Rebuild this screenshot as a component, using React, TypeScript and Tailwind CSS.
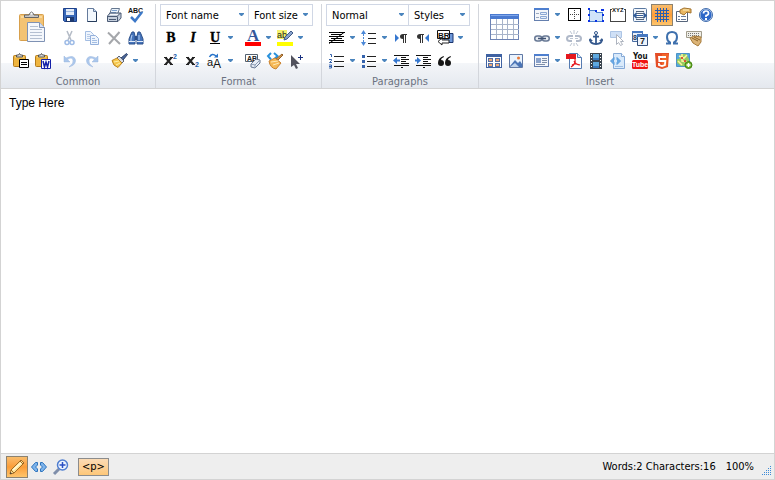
import { useState, type ReactNode } from "react";

const BLUE = "#3563ad";

// ---- icons ----

function Icon({ children, crisp }: { children: ReactNode; crisp?: boolean }) {
  return (
    <svg width="16" height="16" viewBox="0 0 16 16" fill="none" className="shrink-0 overflow-visible" aria-hidden="true" shapeRendering={crisp ? "crispEdges" : undefined}>
      {children}
    </svg>
  );
}

function Arrow() {
  return (
    <svg width="5" height="4" viewBox="0 0 5 4" aria-hidden="true">
      <path d="M0 0h5v1L3 3H2L0 1z" fill="#4a84bd" />
    </svg>
  );
}

function Clip() {
  return (
    <>
      <rect x=".5" y="2.500" width="12" height="11" rx="1" fill="#efb53f" stroke="#b47c1c" />
      <path d="M2 4h9" stroke="#fbdf92" />
      <path d="M3.500 4V2h2q1-3 2 0h2v2z" fill="#ddd" stroke="#555" />
    </>
  );
}

const pasteBig = (
  <svg width="28" height="32" viewBox="0 0 28 32" fill="none" aria-hidden="true">
    <rect x="1.500" y="3.500" width="24" height="26" rx="1" fill="#f3c374" stroke="#d8a04c" />
    <path d="M3 5h21v2H3z" fill="#f9d99d" />
    <path d="M6.500 6.500V4h4.500q2.500-6 5 0h4.500v2.500z" fill="#c9c9c9" stroke="#666" />
    <circle cx="13.500" cy="2.500" r="1" fill="#fff" />
    <path d="M9.500 11.500h12l5 5v14h-17z" fill="#f4f7fc" stroke="#7f92b4" />
    <path d="M21.500 11.500v5h5" fill="#d6e0f2" stroke="#7f92b4" />
    <path d="M12 15.500h8M12 18.500h12M12 21.500h12M12 24.500h12M12 27.500h12" stroke="#b4bfd1" />
  </svg>
);

const tableBig = (
  <svg width="30" height="26" viewBox="0 0 30 26" fill="none" aria-hidden="true" shapeRendering="crispEdges">
    <rect x="0.500" y="0.500" width="28" height="25" fill="#fff" stroke="#6d83b4" />
    <path d="M0 0h29v5H0z" fill="#4a7ad0" />
    <path d="M1 1h27v1H1z" fill="#7ea5ea" />
    <path d="M1 10.500h28M1 15.500h28M1 20.500h28M6.500 5v20M12.500 5v20M17.500 5v20M23.500 5v20" stroke="#a8b4ca" />
  </svg>
);

const save = (
  <Icon>
    <path d="M1.500 1.500h13v13h-12l-1-1z" fill="#3868b8" stroke="#1d418c" />
    <path d="M4 2h8v6H4z" fill="#e4ecf8" />
    <path d="M4 4.500h8" stroke="#9eb9e2" />
    <path d="M4 10h8v5H4z" fill="#1e396f" />
    <path d="M5 11h3v3H5z" fill="#fff" />
  </Icon>
);
const page = (
  <Icon>
    <path d="M3.500 1.500h6l3 3v10h-9z" fill="#f3f8fd" stroke="#657b9c" />
    <path d="M12.500 5v9.500h-9" stroke="#263c5b" />
    <path d="M9.500 1.500v3h3" fill="#c8d8ec" stroke="#657b9c" />
  </Icon>
);
const print = (
  <Icon>
    <path d="M5.500 1.500h8l-2 6h-8z" fill="#eaf3fc" stroke="#65778f" />
    <path d="M6 3.500h5M5 5.500h5" stroke="#7da2d0" />
    <path d="M1.500 9l2.500-3h11v5l-3 3.500H1.500z" fill="#c5cfdd" stroke="#4b5b75" />
    <path d="M1.500 9.500H11L14.500 6M11.500 9.500v5M3 12.500h7" stroke="#4b5b75" />
    <path d="M4 7.500h8" stroke="#f5f8fc" />
  </Icon>
);
const spell = (
  <Icon>
    <text x="0" y="6" fontSize="7" fontWeight="700" fill="#111" fontFamily="Liberation Sans, sans-serif">ABC</text>
    <path d="M3 10l4 4 7-9" stroke="#3c78c8" strokeWidth="2.500" />
  </Icon>
);
const cut = (
  <Icon>
    <path d="M5 1l4 9M10 1L6 10" stroke="#b4bbc6" strokeWidth="1.500" />
    <circle cx="5" cy="12.500" r="2" stroke="#9ebbe6" strokeWidth="1.500" />
    <circle cx="10" cy="12.500" r="2" stroke="#9ebbe6" strokeWidth="1.500" />
  </Icon>
);
const copy = (
  <Icon>
    <path d="M1.500 1.500h5l3 3v6h-8z" fill="#eff5fd" stroke="#a3bde2" />
    <path d="M3 4.500h3M3 6.500h4M3 8.500h3" stroke="#b7cbe8" />
    <path d="M6.500 5.500h5l3 3v6h-8z" fill="#eff5fd" stroke="#94b0db" />
    <path d="M8 8.500h3M8 10.500h5M8 12.500h5" stroke="#a3bde2" />
  </Icon>
);
const remove = <Icon><path d="M2 2.500l12 11.500M13.500 2L3 14" stroke="#a5a7ab" strokeWidth="2" /></Icon>;
const find = (
  <Icon>
    <path d="M1 9l2-5 1-2h2l1 4v8H1zM9 6l1-4h2l1 2 2 5v5H9z" fill="#4674bb" stroke="#2d518b" />
    <path d="M7 6h2v4H7z" fill="#2d518b" />
    <path d="M4 5l-1 4v2M11 5v5" stroke="#b8d2f4" />
    <path d="M1 11.500h6M9 11.500h6" stroke="#e3edfa" />
  </Icon>
);
const pasteText = (
  <Icon>
    <Clip />
    <path d="M6.500 6.500h9v8h-9z" fill="#fff" stroke="#000" />
    <path d="M8 9.500h6M8 11.500h6" stroke="#000" />
  </Icon>
);
const pasteWord = (
  <Icon>
    <Clip />
    <path d="M6.500 6.500h9v9h-9z" fill="#fff" stroke="#1420a8" />
    <path d="M8 8l1.500 6L11 9l1.500 5L14 8" stroke="#1420a8" strokeWidth="1.500" />
  </Icon>
);
const undo = (
  <Icon>
    <path d="M2 3v6h6L5.500 6.500Q10 3.500 11 7t-4 7q7-2 6.500-7Q12 1 4 5z" fill="#abc7ec" stroke="#9bb7df" strokeWidth=".5" />
  </Icon>
);
const redo = (
  <Icon>
    <path d="M14 3v6H8l2.500-2.500Q6 3.500 5 7t4 7Q2 12 2.500 7 4 1 12 5z" fill="#abc7ec" stroke="#9bb7df" strokeWidth=".5" />
  </Icon>
);
const brush = (
  <Icon>
    <path d="M14.500.5l1 1L11 7 9 5z" fill="#4c689b" stroke="#293e67" />
    <path d="M7 3l5 5-2 2-5-5z" fill="#d9dde5" stroke="#5c6678" />
    <path d="M5 5l5 5-4 4.500Q1 13 0 7.500z" fill="#f5c64d" stroke="#bd8522" />
    <path d="M2 9l5-1M4 12l4-2" stroke="#fff0a8" />
  </Icon>
);

function Letter({ char, italic, underline }: { char: string; italic?: boolean; underline?: boolean }) {
  return (
    <Icon>
      <text x="8" y="12" textAnchor="middle" fontSize="14" fontWeight="700" fontStyle={italic ? "italic" : "normal"} fill="#000" stroke="#000" strokeWidth=".3" fontFamily="Liberation Serif, serif">{char}</text>
      {underline && <path d="M3 13.500h10" stroke="#000" />}
    </Icon>
  );
}

const fontColor = (
  <Icon>
    <text x="2" y="11" fontSize="17" fontWeight="700" fill="#35589b" fontFamily="Liberation Serif, serif">A</text>
    <path d="M0 12h16v4H0z" fill="#f00" />
  </Icon>
);
const highlight = (
  <Icon>
    <path d="M0 0h10v9H0z" fill="#f5f26a" />
    <text x="0" y="8" fontSize="9" fill="#222" fontFamily="Liberation Sans, sans-serif">ab</text>
    <path d="M14 1l2 2-6 6-3 1 1-3z" fill="#8aa3cd" stroke="#415b87" />
    <path d="M0 12h16v4H0z" fill="#ff0" />
  </Icon>
);
const scriptBase = (
  <>
    <path d="M2.500 4.500l6 7M8.500 4.500l-6 7" stroke="#222" strokeWidth="2" />
    <path d="M1 4.500h3M7 4.500h3M1 11.500h3M7 11.500h3" stroke="#222" />
  </>
);
const sup = (
  <Icon>
    {scriptBase}
    <text x="10" y="6" fontSize="7" fontWeight="700" fill="#225caa" fontFamily="Liberation Sans, sans-serif">2</text>
  </Icon>
);
const sub = (
  <Icon>
    {scriptBase}
    <text x="10" y="14" fontSize="7" fontWeight="700" fill="#225caa" fontFamily="Liberation Sans, sans-serif">2</text>
  </Icon>
);
const changeCase = (
  <Icon>
    <text x="0" y="13" fontSize="11" fill="#111" fontFamily="Liberation Sans, sans-serif">a</text>
    <text x="6" y="15" fontSize="12" fill="#111" fontFamily="Liberation Sans, sans-serif">A</text>
    <path d="M2.500 4Q5-.5 9 3" stroke="#2773ca" strokeWidth="1.500" />
    <path d="M7 4.500h4V.5z" fill="#2773ca" />
  </Icon>
);
const clearFormat = (
  <Icon>
    <path d="M.5 1.500h12v7H.5z" fill="#fff" stroke="#52606f" />
    <text x="2" y="8" fontSize="7" fontWeight="700" fill="#222" fontFamily="Liberation Sans, sans-serif">AB</text>
    <path d="M6 11l5-5 4 1v3l-5 5-4-1z" fill="#e8edf5" stroke="#667690" />
    <path d="M6 11l4 1 5-5M10 12v3" stroke="#8d9db6" />
  </Icon>
);
const codeClean = (
  <Icon>
    <path d="M4 0L1 3l3 3.500M7 0l3.500 3L7 6.500" stroke="#2991dc" strokeWidth="2" />
    <path d="M15 1l1 1-5 5-2-1z" fill="#d3964d" stroke="#956329" />
    <path d="M8 5l6 5-5 6q-6-1-7-8z" fill="#f5b856" stroke="#c98332" />
    <path d="M4 9l7-1M6 12l6-2" stroke="#ffe8b5" />
  </Icon>
);
const pointerAdd = (
  <Icon>
    <path d="M2 2l9 9H7l2 4-2 1-2-4-3 2z" fill="#52535e" />
    <path d="M9 4.500h5M11.500 2v5" stroke="#182f7e" />
  </Icon>
);

const align = (
  <Icon crisp>
    <path d="M0 2h16v1H0zM2 4h11v1H2zM0 6h15v1H0zM2 8h11v1H2zM0 10h15v1H0zM0 12h15v1H0z" fill="#000" />
    <path d="M0 13.500L15 2.500" stroke="#000" shapeRendering="auto" />
  </Icon>
);
const lineHeight = (
  <Icon>
    <path d="M2.500 4v8" stroke="#4c89d8" strokeDasharray="2 1" />
    <path d="M0 4l2.500-4L5 4zM0 12l2.500 4L5 12z" fill="#4c89d8" />
    <path d="M7 3.500h8M7 8.500h8M7 13.500h8" stroke="#222" />
  </Icon>
);

function Pilcrow({ x }: { x: number }) {
  return <path transform={`translate(${x} 0)`} d="M7 4H3Q0 4 0 6.500T3 9v4h1V5h1v8h1V5h1z" fill="#333" />;
}

const ltr = <Icon><path d="M2 4l4 4-4 4z" fill="#3577cf" /><Pilcrow x={7} /></Icon>;
const rtl = <Icon><Pilcrow x={2} /><path d="M14 4l-4 4 4 4z" fill="#3577cf" /></Icon>;
const lineBreak = (
  <Icon>
    <path d="M5 3.500h11v9H9l-2-3z" fill="#6e98d9" stroke="#1b356e" />
    <path d="M.5.500h12v8H.5z" fill="#fff" stroke="#111" />
    <text x="1" y="8" fontSize="8" fontWeight="700" fill="#111" fontFamily="Liberation Sans, sans-serif">BR</text>
    <path d="M1 11.500l4-3.500v2h7v3H5v2z" fill="#fff" stroke="#222" />
  </Icon>
);
const ordered = (
  <Icon>
    <path d="M1 1.500h1.500V4M0 6.500h2.500v1L.5 9.500H3M0 12h2.500v3H0M0 13.500h2" stroke={BLUE} />
    <path d="M5 3.500h10M5 8.500h10M5 13.500h10" stroke="#222" />
  </Icon>
);
const bullets = (
  <Icon>
    <path d="M1 2h3v3H1zM1 7h3v3H1zM1 12h3v3H1z" fill={BLUE} />
    <path d="M6 3.500h9M6 8.500h9M6 13.500h9" stroke="#222" />
  </Icon>
);
const indentLines = <path d="M1 2.500h15M8 4.500h5M8 6.500h8M8 8.500h5M8 10.500h8M1 12.500h15M8 14.500h2" stroke="#111" />;
const outdent = <Icon>{indentLines}<path d="M0 7.500L4 4v2.500h3v2H4V11z" fill="#3577cf" /></Icon>;
const indent = <Icon>{indentLines}<path d="M6 7.500L2 4v2.500H0v2h2V11z" fill="#3577cf" /></Icon>;
const quote = (
  <Icon>
    <path d="M6.500 3Q1 5 1 10q0 3 3 3t3-3-3-3q0-2 3-3zM13.500 3Q8 5 8 10q0 3 3 3t3-3-3-3q0-2 3-3z" fill="#151515" />
  </Icon>
);

const frame = (
  <>
    <rect x=".5" y="1.500" width="14" height="12" fill="#f4f6fa" stroke="#657fae" />
    <path d="M0 1h15v2H0z" fill="#4e7fcf" />
  </>
);
const form = (
  <Icon>
    {frame}
    <path d="M2 6.500h3M2 10.500h3" stroke="#9aa8bf" />
    <path d="M6.500 5.500h6v2h-6zM6.500 9.500h6v2h-6z" fill="#e8f0fb" stroke="#8ca8d4" />
  </Icon>
);
const details = (
  <Icon>
    {frame}
    <path d="M2 5h5v5H2z" fill="#8ba3cb" />
    <path d="M8 5.500h5M8 7.500h5M8 9.500h5M2 11.500h9" stroke="#7f8fa9" />
  </Icon>
);
const gallery = (
  <Icon crisp>
    <path d="M0 1h16v14H0z" fill="#3f62a2" />
    <path d="M1 4h14v10H1z" fill="#fff" />
    <path d="M2 5h5v4H2zM9 5h5v4H9zM2 10h5v4H2zM9 10h5v4H9z" fill="#536fa5" />
    <path d="M3 6h3v2H3zM10 6h3v2h-3zM3 11h3v2H3zM10 11h3v2h-3z" fill="#efaa78" />
  </Icon>
);
const image = (
  <Icon>
    <path d="M1.500 1.500h13v13h-13z" fill="#eaf3fd" stroke="#6079a5" />
    <path d="M2 13l5-6 3 3 2-2 2 3v3H2z" fill="#4a75b7" />
    <path d="M2 14l5-4 4 4z" fill="#bfd4ee" />
    <circle cx="10.500" cy="5" r="1.500" fill="#e77938" />
  </Icon>
);
const link = (
  <Icon>
    <rect x=".75" y="6" width="7" height="5" rx="2.500" fill="#e9edf3" stroke="#687995" strokeWidth="1.500" />
    <rect x="8.250" y="6" width="7" height="5" rx="2.500" fill="#e9edf3" stroke="#687995" strokeWidth="1.500" />
    <path d="M4 8.500h8" stroke="#405372" strokeWidth="1.500" />
  </Icon>
);
const unlink = (
  <Icon>
    <path d="M7 6H4Q1 6 1 8.500T4 11h2M9 6h3q3 0 3 2.500T12 11h-2" stroke="#b0b9c9" strokeWidth="2" />
    <path d="M4 8.500h3M9 8.500h3M4 1l2 3M8 0v4M12 1l-2 3M4 16l2-3M8 13v3M12 16l-2-3" stroke="#bcc5d2" />
  </Icon>
);
const border = (
  <Icon crisp>
    <path d="M2 1h13v13H2z" fill="#000" />
    <path d="M3 2h11v11H3z" fill="#fff" />
    <path d="M4 7h1v1H4zM6 7h1v1H6zM8 7h1v1H8zM10 7h1v1h-1zM12 7h1v1h-1zM8 3h1v1H8zM8 5h1v1H8zM8 9h1v1H8zM8 11h1v1H8z" fill="#444" />
  </Icon>
);
const box = (
  <Icon crisp>
    <path d="M1 3h5l2 2h6v9H1z" fill="#d1e4fa" stroke="#4e83cc" />
    <path d="M0 1h2v2H0zM13 2h3v2h-3zM0 13h2v2H0zM14 13h2v2h-2zM0 7h2v2H0zM14 7h2v2h-2zM7 13h2v2H7zM7 3h2v2H7z" fill="#0a31e5" />
  </Icon>
);
const anchor = (
  <Icon>
    <circle cx="8" cy="3" r="1.500" stroke="#34588d" />
    <path d="M8 4v11M5 6.500h6M2 9q0 5 6 5 6 0 6-5" stroke="#34588d" strokeWidth="1.750" />
    <path d="M1 11l1-3 3 3zM11 11l3-3 1 3z" fill="#34588d" />
  </Icon>
);
const pdf = (
  <Icon>
    <path d="M3.500.500h8l4 4v11h-12z" fill="#fff" stroke="#557bb1" />
    <path d="M11.500.500v4h4" fill="#d7e5f8" stroke="#557bb1" />
    <path d="M0 1h10v5H0z" fill="#e5171d" />
    <path d="M9 6q1 5-4 8M8 8q2 4 6 4-5-2-8 0" stroke="#e5171d" strokeWidth="1.200" />
  </Icon>
);
const film = (
  <Icon crisp>
    <path d="M2 0h12v16H2z" fill="#3a444f" />
    <path d="M5 1h6v6H5zM5 9h6v6H5z" fill="#5fa9df" />
    <path d="M5 5h6v2H5zM5 13h6v2H5z" fill="#3978bd" />
    <path d="M3.500 1v15M12.500 1v15" stroke="#fff" strokeDasharray="1 2" />
  </Icon>
);
const xyz = (
  <Icon crisp>
    <path d="M2 2.500H.5v12h15v-12H14" stroke="#444" />
    <text x="2" y="5" fontSize="6" fontWeight="700" fill="#111" fontFamily="Liberation Sans, sans-serif">XYZ</text>
  </Icon>
);
const pageBreak = (
  <Icon>
    <rect x="1.500" y="1.500" width="13" height="13" rx="1" fill="#f2f6fc" stroke="#59779f" />
    <path d="M4 4.500h8M4 6.500h8M4 10.500h8M4 12.500h8" stroke="#53657d" />
    <path d="M5 7h6v3H5z" fill="#fff" />
    <path d="M1 8.500L4.500 5v7zM15 8.500L11.500 5v7zM4 8h8v1H4z" fill="#335d99" />
  </Icon>
);
const grid = (
  <Icon crisp>
    <path d="M3 1h1v14H3zM6 1h1v14H6zM9 1h1v14H9zM12 1h1v14h-1zM1 3h14v1H1zM1 6h14v1H1zM1 9h14v1H1zM1 12h14v1H1z" fill="#2a5fb0" />
  </Icon>
);
const props = (
  <Icon>
    <path d="M.5 4.500h11v10H.5z" fill="#fff" stroke="#56657b" />
    <path d="M2 9.500h2M2 12.500h2M5 9.500h5M5 12.500h5" stroke="#687c9b" />
    <path d="M4 3l4-2 7 1v4l-4-1-3 3-4-2z" fill="#e9b864" stroke="#a37532" />
    <path d="M7 3h6" stroke="#fff0bd" />
  </Icon>
);
const help = (
  <Icon>
    <circle cx="8" cy="8" r="6" fill="#2f68c8" stroke="#b7ccec" />
    <circle cx="8" cy="8" r="6.500" stroke="#426ead" />
    <path d="M5.500 6.500Q5.500 4 8 4t2.500 2.200Q10.500 8 8 8.500V10" stroke="#fff" strokeWidth="1.700" />
    <path d="M7 11h2v2H7z" fill="#fff" />
  </Icon>
);
const button = (
  <Icon>
    <path d="M.5 1.500h11v6H.5z" fill="#cfe0f6" stroke="#adc5e5" />
    <path d="M6.500 4.500l7 7h-3l2 3-2 1-2-3-2 2z" fill="#fff" stroke="#aeb4bf" />
  </Icon>
);
const date = (
  <Icon>
    <path d="M.5 1.500h10v10H.5z" fill="#e8eff9" stroke="#496da3" />
    <path d="M5.500 4.500h10v11h-10z" fill="#edf3fb" stroke="#344f7b" />
    <path d="M0 1h11v2H0zM5 4h11v3H5z" fill="#4677c0" />
    <text x="1" y="10" fontSize="7" fontWeight="700" fill="#243b61" fontFamily="Liberation Sans, sans-serif">8</text>
    <text x="8" y="14" fontSize="9" fontWeight="700" fill="#222" fontFamily="Liberation Sans, sans-serif">7</text>
  </Icon>
);
const omega = (
  <Icon>
    <path d="M2 13.500h4v-1Q3 11 3 7q0-5 5-5t5 5q0 4-3 5.500v1h4" stroke="#3e70ad" strokeWidth="2" />
  </Icon>
);
const keyboard = (
  <Icon>
    <path d="M.5 1.500h15v6H.5z" fill="#f0efe8" stroke="#a19c8c" />
    <path d="M2 3.500h12M2 5.500h12" stroke="#777" strokeDasharray="1 1" />
    <path d="M4 8l4-2 7 1v5l-3 4-5-3z" fill="#dcb477" stroke="#a67b3b" />
    <path d="M6 8l6 3M8 7l6 3" stroke="#8b6227" />
  </Icon>
);
const embed = (
  <Icon>
    <path d="M3.500.500h8l3 3v12h-11z" fill="#d9eafb" stroke="#84a9d7" />
    <path d="M11.500.500v3h3" stroke="#84a9d7" fill="#fff" />
    <path d="M4 4.500L.5 8 4 11.500V9.500L3 8l1-1.500zM7 4.500L10.500 8 7 11.500V9.500L8 8 7 6.500z" fill="#6aabe8" stroke="#5b9cdc" />
    <path d="M5 13.500h8" stroke="#9fbfe2" />
  </Icon>
);
const youtube = (
  <Icon>
    <text x="1" y="6" fontSize="8" fontWeight="700" fill="#111" fontFamily="DejaVu Sans Condensed, sans-serif">You</text>
    <rect y="7" width="16" height="9" rx="1.500" fill="#f01414" />
    <text x="0" y="14" fontSize="7" fontWeight="700" fill="#fff" fontFamily="Liberation Sans, sans-serif">Tube</text>
  </Icon>
);
const html5 = (
  <Icon>
    <path d="M1 0h14l-1 14-6 2-6-2z" fill="#e44d26" />
    <path d="M8 1h6l-1 12-5 2z" fill="#f16529" />
    <path d="M12 4H5l.3 4h6l-.4 4L8 13l-3-1-.1-2" stroke="#fff" strokeWidth="1.800" />
  </Icon>
);
const map = (
  <Icon>
    <path d="M.5.500h13v13H.5z" fill="#97cc62" stroke="#4b93c8" />
    <path d="M1 1h4L3 6H1zM10 1h3v5zM1 10l4 3H1z" fill="#57a8dc" />
    <path d="M3 3l5 2 3-3M6 1v7l6 1M2 8l4 4" stroke="#fff4a0" strokeWidth="1.500" />
    <path d="M5 4h2v2H5zM8 7h2v2H8z" fill="#d95738" />
    <circle cx="12.500" cy="12" r="3.500" fill="#68ad24" stroke="#438411" />
    <path d="M12.500 10v4M10.500 12h4" stroke="#fff" strokeWidth="1.500" />
  </Icon>
);

const pencil = (
  <Icon>
    <path d="M12 1l3 3L5 14l-4 1 1-4z" fill="#ffe294" stroke="#a06b26" />
    <path d="M11 2l3 3M2 11l3 3" stroke="#a06b26" />
    <path d="M4 11l8-7" stroke="#fffbdc" strokeWidth="1.500" />
    <path d="M1 15l.5-2L3 14.500z" fill="#333" />
  </Icon>
);
const code = (
  <Icon>
    <path d="M4.500 3.500h2V6l-2 2 2 2v2.500h-2L.5 8zM11.500 3.500h-2V6l2 2-2 2v2.500h2l4-4.500z" fill="#7db4ec" stroke="#2f74bd" />
  </Icon>
);
const preview = (
  <Icon>
    <path d="M6 10l-5 5" stroke="#7f8eaa" strokeWidth="3" />
    <circle cx="9.500" cy="6" r="5" fill="#edf5ff" stroke="#4f7ed0" strokeWidth="1.500" />
    <path d="M9.500 3v6M6.500 6h6" stroke="#284fc3" strokeWidth="1.500" />
  </Icon>
);

// ---- toolbar parts ----

type ToolProps = { label: string; icon: ReactNode; menu?: boolean; active?: boolean; onClick?: () => void };

function Tool({ label, icon, menu, active, onClick }: ToolProps) {
  return (
    <div className="flex">
      <button type="button" title={label} aria-label={label} aria-pressed={active} onClick={onClick}
        className={"flex h-[22px] w-[22px] items-center justify-center " + (active ? "border border-[#8c8270] bg-linear-to-b from-[#f9bd6c] via-[#fb9d37] to-[#fec56b]" : "hover:bg-orange-100")}>
        {icon}
      </button>
      {menu && (
        <button type="button" aria-label={`${label} options`} className="flex h-[22px] w-[10px] items-center pl-0.5 hover:bg-orange-100">
          <Arrow />
        </button>
      )}
    </div>
  );
}

function Row({ children }: { children: ReactNode }) {
  return <div className="flex h-[23px] items-start">{children}</div>;
}

function Group({ title, children }: { title: string; children: ReactNode }) {
  return (
    <section aria-label={title} className="flex flex-col border-r border-[#d3d6dc] last:border-r-0">
      <div className="flex grow px-1">{children}</div>
      <h2 className="h-[15px] text-center text-[11px] leading-[17px] text-[#6b7280]">{title}</h2>
    </section>
  );
}

function Picker({ label, options, width }: { label: string; options: string[]; width: string }) {
  return (
    <div className={"relative -mr-px " + width}>
      <select aria-label={label} className="h-[22px] w-full appearance-none border border-[#d0d7e5] bg-white px-[5px] pt-px text-[11px] leading-5 text-black">
        {options.map((o) => <option key={o}>{o}</option>)}
      </select>
      <span className="pointer-events-none absolute inset-y-0 right-[5px] flex items-center"><Arrow /></span>
    </div>
  );
}

export default function App() {
  const [text, setText] = useState("Type Here");
  const [mode, setMode] = useState("Design");
  const [gridOn, setGridOn] = useState(true);

  const words = text.trim() ? text.trim().split(/\s+/).length : 0;
  // the counter includes the paragraph tags wrapped round the text
  const characters = text.length + "<p></p>".length;

  return (
    <div className="flex h-screen flex-col border border-[#d3d3d3] bg-white font-['DejaVu_Sans_Condensed','DejaVu_Sans',sans-serif] text-[11px]">
      <header className="flex shrink-0 border-b border-[#d3d3d3] bg-[linear-gradient(to_bottom,#fff_62px,#f4f6f9_62px,#e4e8ee_100%)] pt-[3px]">
        <Group title="Common">
          <div className="ml-[5px] flex w-11 flex-col">
            <button type="button" aria-label="Paste" className="flex h-[46px] items-center justify-center">{pasteBig}</button>
            <Row>
              <Tool label="Paste text" icon={pasteText} />
              <Tool label="Paste from Word" icon={pasteWord} />
            </Row>
          </div>
          <div className="mr-1 ml-[5px]">
            <Row>
              <Tool label="Save" icon={save} />
              <Tool label="New document" icon={page} />
              <Tool label="Print" icon={print} />
              <Tool label="Spell check" icon={spell} />
            </Row>
            <Row>
              <Tool label="Cut" icon={cut} />
              <Tool label="Copy" icon={copy} />
              <Tool label="Delete" icon={remove} />
              <Tool label="Find" icon={find} />
            </Row>
            <Row>
              <Tool label="Undo" icon={undo} />
              <Tool label="Redo" icon={redo} />
              <span className="w-1.5" />
              <Tool label="Cleanup" icon={brush} menu />
            </Row>
          </div>
        </Group>

        <Group title="Format">
          <div className="mr-[5px]">
            <Row>
              <Picker label="Font name" options={["Font name", "Arial", "Tahoma", "Verdana"]} width="w-[89px]" />
              <Picker label="Font size" options={["Font size", "8pt", "10pt", "12pt"]} width="w-[65px]" />
            </Row>
            <Row>
              <Tool label="Bold" icon={<Letter char="B" />} />
              <Tool label="Italic" icon={<Letter char="I" italic />} />
              <Tool label="Underline" icon={<Letter char="U" underline />} menu />
              <span className="w-1.5" />
              <Tool label="Font color" icon={fontColor} menu />
              <Tool label="Highlight" icon={highlight} menu />
            </Row>
            <Row>
              <Tool label="Superscript" icon={sup} />
              <Tool label="Subscript" icon={sub} />
              <Tool label="Change case" icon={changeCase} menu />
              <span className="w-1.5" />
              <Tool label="Clear formatting" icon={clearFormat} />
              <Tool label="Clean code" icon={codeClean} />
              <Tool label="Select all" icon={pointerAdd} />
            </Row>
          </div>
        </Group>

        <Group title="Paragraphs">
          <div className="mr-[5px]">
            <Row>
              <Picker label="Paragraph format" options={["Normal", "Heading 1", "Heading 2"]} width="w-[83px]" />
              <Picker label="Styles" options={["Styles"]} width="w-[62px]" />
            </Row>
            <Row>
              <Tool label="Alignment" icon={align} menu />
              <Tool label="Line height" icon={lineHeight} menu />
              <Tool label="Left to right" icon={ltr} />
              <Tool label="Right to left" icon={rtl} />
              <Tool label="Line break" icon={lineBreak} menu />
            </Row>
            <Row>
              <Tool label="Numbered list" icon={ordered} menu />
              <Tool label="Bulleted list" icon={bullets} menu />
              <Tool label="Outdent" icon={outdent} />
              <Tool label="Indent" icon={indent} />
              <Tool label="Quote" icon={quote} />
            </Row>
          </div>
        </Group>

        <Group title="Insert">
          <div className="flex w-11 flex-col">
            <button type="button" aria-label="Table" className="flex h-[46px] items-center justify-center">{tableBig}</button>
            <Row>
              <Tool label="Gallery" icon={gallery} />
              <Tool label="Image" icon={image} />
            </Row>
          </div>
          <div className="ml-1">
            <Row>
              <Tool label="Form" icon={form} menu />
              <Tool label="Borders" icon={border} />
              <Tool label="Box" icon={box} />
              <Tool label="Fieldset" icon={xyz} />
              <Tool label="Page break" icon={pageBreak} />
              <Tool label="Grid" icon={grid} active={gridOn} onClick={() => setGridOn(!gridOn)} />
              <Tool label="Properties" icon={props} />
              <Tool label="Help" icon={help} />
            </Row>
            <Row>
              <Tool label="Link" icon={link} menu />
              <Tool label="Unlink" icon={unlink} />
              <Tool label="Anchor" icon={anchor} />
              <Tool label="Button" icon={button} />
              <Tool label="Date and time" icon={date} menu />
              <Tool label="Symbol" icon={omega} />
              <Tool label="Virtual keyboard" icon={keyboard} />
            </Row>
            <Row>
              <Tool label="Template" icon={details} menu />
              <Tool label="PDF" icon={pdf} />
              <Tool label="Video" icon={film} />
              <Tool label="Embed" icon={embed} />
              <Tool label="YouTube" icon={youtube} />
              <Tool label="HTML5" icon={html5} />
              <Tool label="Map" icon={map} />
            </Row>
          </div>
        </Group>
      </header>

      <textarea aria-label="Content" value={text} onChange={(e) => setText(e.target.value)}
        className="min-h-0 w-full grow resize-none px-2 py-1.5 font-['Liberation_Sans',Arial,sans-serif] text-xs leading-4 text-black outline-none" />

      <footer className="flex h-[26px] shrink-0 items-center border-t border-[#d3d3d3] bg-[#eee] pl-[5px] text-black">
        <Tool label="Design" icon={pencil} active={mode === "Design"} onClick={() => setMode("Design")} />
        <Tool label="HTML" icon={code} active={mode === "HTML"} onClick={() => setMode("HTML")} />
        <Tool label="Preview" icon={preview} active={mode === "Preview"} onClick={() => setMode("Preview")} />
        <button type="button" className="ml-1.5 h-[18px] border border-[#8c8c8c] bg-linear-to-b from-[#fbdbb5] to-[#fec778] px-[3px] leading-4">&lt;p&gt;</button>
        <span className="ml-auto pt-0.5">Words:{words} Characters:{characters}</span>
        <span className="ml-2.5 pt-0.5">100%</span>
        <svg width="9" height="9" viewBox="0 0 9 9" className="mr-[3px] mb-1 ml-2 self-end" aria-hidden="true">
          <path d="M8 0h1v1H8zM6 2h1v1H6zM8 2h1v1H8zM4 4h1v1H4zM6 4h1v1H6zM8 4h1v1H8zM2 6h1v1H2zM4 6h1v1H4zM6 6h1v1H6zM8 6h1v1H8zM0 8h1v1H0zM2 8h1v1H2zM4 8h1v1H4zM6 8h1v1H6zM8 8h1v1H8z" fill="#3b8ad8" />
        </svg>
      </footer>
    </div>
  );
}
